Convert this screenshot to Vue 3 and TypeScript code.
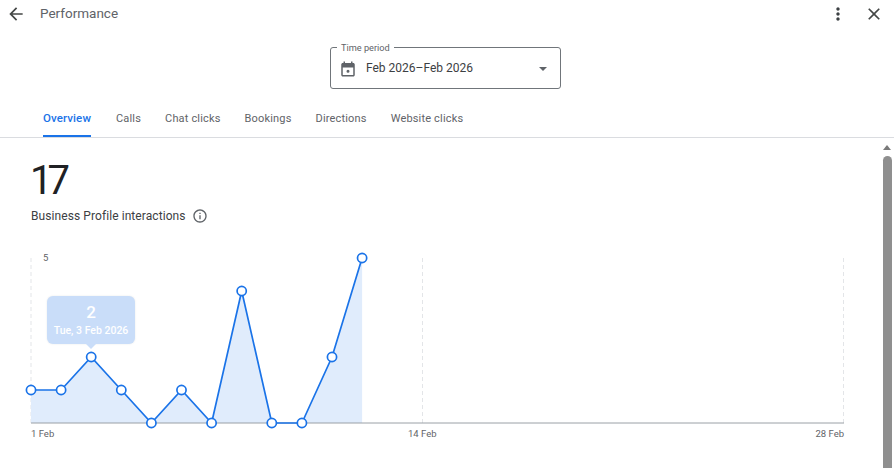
<template>
  <div class="page">
    <header class="topbar">
      <button class="icon-btn back" aria-label="Back">
        <svg width="20" height="20" viewBox="0 0 24 24"><path d="M20 11H7.83l5.59-5.59L12 4l-8 8 8 8 1.41-1.41L7.83 13H20v-2z" /></svg>
      </button>
      <span class="title">Performance</span>
      <button class="icon-btn more" aria-label="More">
        <svg width="20" height="20" viewBox="0 0 24 24"><path d="M12 8c1.1 0 2-.9 2-2s-.9-2-2-2-2 .9-2 2 .9 2 2 2zm0 2c-1.1 0-2 .9-2 2s.9 2 2 2 2-.9 2-2-.9-2-2-2zm0 6c-1.1 0-2 .9-2 2s.9 2 2 2 2-.9 2-2-.9-2-2-2z" /></svg>
      </button>
      <button class="icon-btn close" aria-label="Close">
        <svg width="20" height="20" viewBox="0 0 24 24"><path d="M19 6.41 17.59 5 12 10.59 6.41 5 5 6.41 10.59 12 5 17.59 6.41 19 12 13.41 17.59 19 19 17.59 13.41 12z" /></svg>
      </button>
    </header>

    <div class="period-row">
      <div class="period">
        <span class="period-label">Time period</span>
        <svg class="cal" width="18" height="18" viewBox="0 0 24 24"><path d="M19 4h-1V2h-2v2H8V2H6v2H5c-1.1 0-2 .9-2 2v14c0 1.1.9 2 2 2h14c1.1 0 2-.9 2-2V6c0-1.1-.9-2-2-2zm0 16H5V10h14v10zm-7-7a2 2 0 1 0 0 4 2 2 0 0 0 0-4z" /></svg>
        <span class="period-value">Feb 2026–Feb 2026</span>
        <span class="caret"></span>
      </div>
    </div>

    <nav class="tabs">
      <a v-for="(tab, i) in tabs" :key="tab" class="tab" :class="{ active: i === 0 }">{{ tab }}</a>
    </nav>

    <main class="content">
      <div class="scroll">
        <div class="total">17</div>
        <div class="metric">
          <span>Business Profile interactions</span>
          <svg width="16" height="16" viewBox="0 0 24 24"><path d="M11 7h2v2h-2zm0 4h2v6h-2zm1-9C6.48 2 2 6.48 2 12s4.48 10 10 10 10-4.48 10-10S17.52 2 12 2zm0 18c-4.41 0-8-3.59-8-8s3.59-8 8-8 8 3.59 8 8-3.59 8-8 8z" /></svg>
        </div>

        <div class="chart">
          <svg class="plot" width="882" height="220" viewBox="0 0 882 220">
            <line v-for="x in gridX" :key="x" :x1="x" :x2="x" y1="18" y2="183" class="grid" />
            <polygon :points="areaPoints" class="area" />
            <line x1="31" x2="844" y1="183" y2="183" class="axis" />
            <polyline :points="linePoints" class="line" />
            <circle v-for="p in points" :key="p.x" :cx="p.x" :cy="p.y" r="4.6" class="dot" />
            <text x="43" y="21" class="tick">5</text>
            <text x="31" y="197" class="tick">1 Feb</text>
            <text x="408" y="197" class="tick">14 Feb</text>
            <text x="844" y="197" class="tick end">28 Feb</text>
          </svg>
          <div class="tooltip">
            <div class="tip-value">2</div>
            <div class="tip-date">Tue, 3 Feb 2026</div>
          </div>
        </div>
      </div>

      <div class="scrollbar">
        <span class="arrow"></span>
        <span class="thumb"></span>
      </div>
    </main>
  </div>
</template>

<script setup lang="ts">
const tabs = ['Overview', 'Calls', 'Chat clicks', 'Bookings', 'Directions', 'Website clicks'];

const values = [1, 1, 2, 1, 0, 1, 0, 4, 0, 0, 2, 5];
const baseY = 183;
const unit = 33;
const points = values.map((v, i) => ({
  x: Math.round((31 + i * 30.1) * 10) / 10,
  y: baseY - v * unit,
}));

const gridX = [31, 422.5, 843.5];
const linePoints = points.map((p) => `${p.x},${p.y}`).join(' ');
const areaPoints = `31,${baseY} ${linePoints} ${points[points.length - 1].x},${baseY}`;
</script>

<style>
html,
body {
  margin: 0;
  background: #fff;
  overflow: hidden;
}
</style>

<style scoped>
.page {
  width: 894px;
  height: 468px;
  display: flex;
  flex-direction: column;
  overflow: hidden;
  font-family: Roboto, "Liberation Sans", sans-serif;
  color: #3c4043;
  background: #fff;
}

.topbar {
  height: 28px;
  display: flex;
  align-items: center;
  flex: none;
}

.icon-btn {
  width: 20px;
  height: 20px;
  padding: 0;
  border: none;
  background: none;
  flex: none;
}

.icon-btn svg {
  display: block;
  fill: #5f6368;
}

.back {
  margin-left: 6px;
}

.back svg,
.close svg {
  fill: #444746;
}

.title {
  margin-left: 14px;
  margin-top: -2px;
  font-size: 13.5px;
  color: #5f6368;
}

.more {
  margin-left: auto;
}

.more svg {
  fill: #3c4043;
}

.close {
  margin-left: 16px;
  margin-right: 10px;
}

.period-row {
  display: flex;
  flex: none;
  padding: 19px 0 0 330px;
}

.period {
  position: relative;
  box-sizing: border-box;
  width: 231px;
  height: 42px;
  border: 1px solid #70757a;
  border-radius: 3px;
  display: flex;
  align-items: center;
  padding: 0 13px 0 8px;
}

.period-label {
  position: absolute;
  left: 6px;
  top: -6px;
  padding: 0 4px;
  background: #fff;
  font-size: 9.2px;
  line-height: 11px;
  color: #5f6368;
}

.cal {
  fill: #5f6368;
  flex: none;
  margin-top: 1px;
}

.period-value {
  margin-left: 9px;
  font-size: 12px;
  color: #3c4043;
}

.caret {
  margin-left: auto;
  width: 0;
  height: 0;
  border-left: 4.5px solid transparent;
  border-right: 4.5px solid transparent;
  border-top: 4.5px solid #5f6368;
  margin-top: 1px;
}

.tabs {
  flex: none;
  display: flex;
  gap: 24px;
  padding-left: 43px;
  border-bottom: 1px solid #dadce0;
}

.tab {
  display: flex;
  align-items: center;
  height: 48px;
  box-sizing: border-box;
  padding-top: 12px;
  font-size: 11px;
  color: #5f6368;
  letter-spacing: 0.17px;
  border-bottom: 2px solid transparent;
}

.tab.active {
  margin-right: 1px;
  color: #1a73e8;
  font-size: 11.5px;
  font-weight: 500;
  letter-spacing: 0.1px;
  border-bottom-color: #1a73e8;
}

.content {
  flex: 1;
  display: flex;
  min-height: 0;
}

.scroll {
  flex: 1;
  min-width: 0;
}

.total {
  margin-top: 16px;
  padding-left: 30px;
  font-size: 40px;
  line-height: 53px;
  letter-spacing: -5px;
  color: #202124;
}

.metric {
  display: flex;
  align-items: center;
  gap: 6px;
  padding-left: 31px;
  height: 18px;
  font-size: 12px;
  letter-spacing: 0.08px;
  color: #3c4043;
}

.metric svg {
  fill: #5f6368;
}

.chart {
  position: relative;
  height: 220px;
  margin-top: 15px;
}

.plot {
  display: block;
}

.grid {
  stroke: #e3e5e8;
  stroke-width: 1;
  stroke-dasharray: 4 3;
}

.area {
  fill: #e0ecfc;
}

.axis {
  stroke: #9aa0a6;
  stroke-width: 1;
}

.line {
  fill: none;
  stroke: #1a73e8;
  stroke-width: 1.7;
}

.dot {
  fill: #fff;
  stroke: #1a73e8;
  stroke-width: 1.7;
}

.tick {
  font-size: 9.5px;
  fill: #5f6368;
}

.tick.end {
  text-anchor: end;
}

.tooltip {
  position: absolute;
  left: 47px;
  top: 56px;
  width: 88px;
  height: 48px;
  border-radius: 6px;
  background: #c9ddf9;
  box-shadow: 0 0 2px rgba(60, 64, 67, 0.12);
  color: #fff;
  text-align: center;
}

.tooltip::after {
  content: "";
  position: absolute;
  left: 39px;
  bottom: -5px;
  border-left: 5px solid transparent;
  border-right: 5px solid transparent;
  border-top: 5px solid #c9ddf9;
}

.tip-value {
  padding-top: 7px;
  font-size: 17px;
  line-height: 18px;
  font-weight: 500;
}

.tip-date {
  margin-top: 3px;
  font-size: 10.5px;
  line-height: 14px;
  font-weight: 500;
}

.scrollbar {
  width: 12px;
  flex: none;
  margin-right: 1px;
  display: flex;
  flex-direction: column;
  align-items: center;
}

.arrow {
  margin-top: 7px;
  border-left: 4px solid transparent;
  border-right: 4px solid transparent;
  border-bottom: 5px solid #7a7a7a;
}

.thumb {
  margin-top: 6px;
  width: 9px;
  flex: 1;
  background: #8f8f8f;
  border-radius: 5px 5px 0 0;
}
</style>
